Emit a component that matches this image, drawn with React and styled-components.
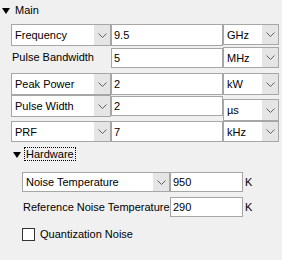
import React from "react";
import styled, { createGlobalStyle } from "styled-components";

const Global = createGlobalStyle`
  html, body { margin: 0; padding: 0; background: #f0f0f0; }
  body {
    font-family: "Liberation Sans", Arial, sans-serif;
    font-size: 11px;
    color: #000;
    width: 282px;
    height: 260px;
    overflow: hidden;
  }
`;

const Panel = styled.div`
  display: flex;
  flex-direction: column;
  padding-top: 3px;
`;

const Header = styled.div`
  display: flex;
  align-items: center;
  height: 14px;
  padding-left: ${(p) => p.$indent}px;
  margin-top: ${(p) => p.$top || 0}px;
  gap: 3px;
`;

const Triangle = styled.span`
  width: 0;
  height: 0;
  border-left: 4px solid transparent;
  border-right: 4px solid transparent;
  border-top: 6px solid #000;
  margin-top: 1px;
`;

const HeaderText = styled.span`
  line-height: 12px;
  padding: 0 1px;
  border: 1px ${(p) => (p.$focus ? "dotted #000" : "solid transparent")};
`;

const Body = styled.div`
  display: flex;
  flex-direction: column;
  padding-left: ${(p) => p.$indent}px;
`;

const Row = styled.div`
  display: grid;
  grid-template-columns: ${(p) => p.$cols};
  align-items: start;
  height: ${(p) => p.$h}px;
  margin-top: ${(p) => p.$top || 0}px;
`;

const SelectBox = styled.div`
  box-sizing: border-box;
  display: flex;
  align-items: stretch;
  height: ${(p) => p.$h || 22}px;
  margin-top: ${(p) => p.$dy || 0}px;
  border: 1px solid #a6a6a6;
  background: #fff;
`;

const SelectText = styled.div`
  flex: 1;
  display: flex;
  align-items: center;
  padding-left: ${(p) => p.$pad || 3}px;
  white-space: nowrap;
  overflow: hidden;
`;

const DropButton = styled.div`
  width: 16px;
  background: #e5e5e5;
  display: flex;
  align-items: center;
  justify-content: center;
`;

const Field = styled.div`
  box-sizing: border-box;
  height: ${(p) => p.$h || 22}px;
  margin-top: ${(p) => p.$dy || 0}px;
  border: 1px solid #a6a6a6;
  background: #fff;
  display: flex;
  align-items: center;
  padding-left: 2px;
`;

const Label = styled.div`
  height: ${(p) => p.$h || 22}px;
  display: flex;
  align-items: center;
  padding-left: 1px;
  white-space: nowrap;
`;

const Unit = styled.div`
  height: 20px;
  display: flex;
  align-items: center;
  padding-left: 2px;
`;

const CheckRow = styled.div`
  display: flex;
  align-items: center;
  gap: 5px;
  margin-top: ${(p) => p.$top}px;
  height: 14px;
`;

const CheckBox = styled.div`
  box-sizing: border-box;
  width: 13px;
  height: 13px;
  border: 1px solid #333;
  background: #fff;
`;

const Chevron = () => (
  <svg width="9" height="5" viewBox="0 0 9 5">
    <polyline points="0.5,0.5 4.5,4.5 8.5,0.5" fill="none" stroke="#606060" strokeWidth="1" />
  </svg>
);

const Select = ({ text, h, dy, pad }) => (
  <SelectBox $h={h} $dy={dy}>
    <SelectText $pad={pad}>{text}</SelectText>
    <DropButton>
      <Chevron />
    </DropButton>
  </SelectBox>
);

const MAIN_COLS = "100px 112px 56px";
const HW_COLS = "148px 73px 20px";

export default function App() {
  return (
    <>
      <Global />
      <Panel>
        <Header $indent={2}>
          <Triangle />
          <HeaderText>Main</HeaderText>
        </Header>
        <Body $indent={11}>
          <Row $cols={MAIN_COLS} $h={22} $top={7}>
            <Select text="Frequency" />
            <Field>9.5</Field>
            <Select text="GHz" h={21} />
          </Row>
          <Row $cols={MAIN_COLS} $h={21} $top={1}>
            <Label $h={20}>Pulse Bandwidth</Label>
            <Field $h={20} $dy={1}>5</Field>
            <Select text="MHz" h={21} />
          </Row>
          <Row $cols={MAIN_COLS} $h={22} $top={5}>
            <Select text="Peak Power" />
            <Field>2</Field>
            <Select text="kW" />
          </Row>
          <Row $cols={MAIN_COLS} $h={26} $top={0}>
            <Select text="Pulse Width" />
            <Field $h={20} $dy={1}>2</Field>
            <Select text="µs" dy={4} />
          </Row>
          <Row $cols={MAIN_COLS} $h={21} $top={0}>
            <Select text="PRF" h={21} />
            <Field $h={21}>7</Field>
            <Select text="kHz" h={21} />
          </Row>
        </Body>
        <Header $indent={13} $top={5}>
          <Triangle />
          <HeaderText $focus>Hardware</HeaderText>
        </Header>
        <Body $indent={22}>
          <Row $cols={HW_COLS} $h={20} $top={11}>
            <Select text="Noise Temperature" h={20} />
            <Field $h={20}>950</Field>
            <Unit>K</Unit>
          </Row>
          <Row $cols={HW_COLS} $h={20} $top={5}>
            <Label $h={20}>Reference Noise Temperature</Label>
            <Field $h={20}>290</Field>
            <Unit>K</Unit>
          </Row>
          <CheckRow $top={10}>
            <CheckBox />
            <span>Quantization Noise</span>
          </CheckRow>
        </Body>
      </Panel>
    </>
  );
}
